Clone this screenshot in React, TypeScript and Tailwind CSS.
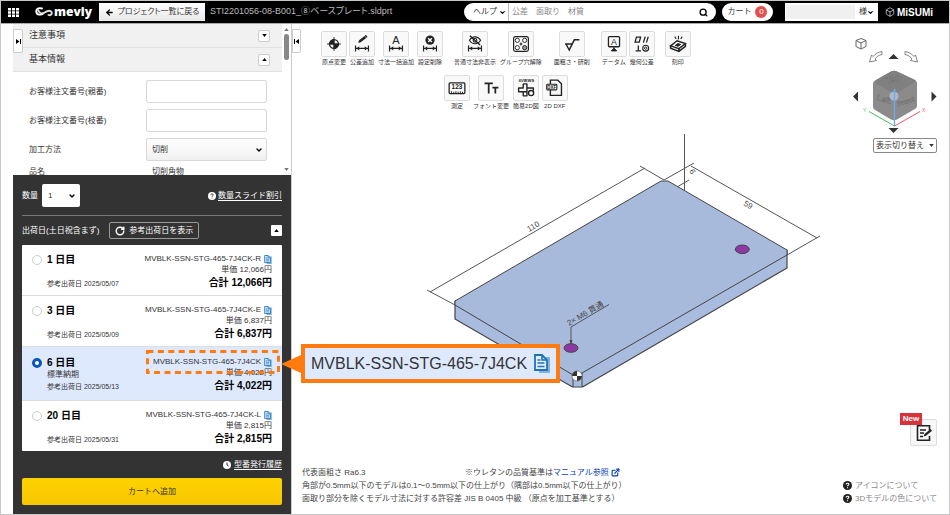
import type { ReactNode } from 'react';
import { ArrowLeft, Box, ChevronDown, ExternalLink, RotateCw, Search } from 'lucide-react';

const quotes = [
  { days: '1', date: '2025/05/07', code: 'MVBLK-SSN-STG-465-7J4CK-R', price: '12,066' },
  { days: '3', date: '2025/05/09', code: 'MVBLK-SSN-STG-465-7J4CK-E', price: '6,837' },
  { days: '6', date: '2025/05/13', code: 'MVBLK-SSN-STG-465-7J4CK', price: '4,022', note: '標準納期', selected: true },
  { days: '20', date: '2025/05/31', code: 'MVBLK-SSN-STG-465-7J4CK-L', price: '2,815' },
];

function CopyIcon({ className }: { className: string }) {
  return (
    <svg viewBox="0 0 16 19" className={className} fill="none">
      <path d="M5 3h11v16H5z" fill="#7fb4e0" />
      <path d="M1 1h7l5 5v10H1z" fill="#e3edff" stroke="#1e73b8" strokeWidth="1.8" />
      <path d="M8 1v5h5M3.500 6h3M3.500 9h7M3.500 12.500h7" stroke="#1e73b8" strokeWidth="1.6" />
    </svg>
  );
}

function HelpIcon({ className }: { className: string }) {
  return (
    <svg viewBox="0 0 10 10" className={className}>
      <circle cx="5" cy="5" r="5" fill="currentColor" />
      <path d="M3.500 4c0-2 3-2 3-.3 0 1-1.500 1-1.500 2.100M5 7v1" fill="none" stroke="var(--mark)" strokeWidth="1.200" />
    </svg>
  );
}

function Triangle({ className }: { className: string }) {
  return (
    <svg viewBox="0 0 6 4" className={className} fill="currentColor">
      <path d="M0 4 3 0l3 4z" />
    </svg>
  );
}

function DimArrow() {
  return (
    <g>
      <path d="M6 14.500v6.500M20 14.500v6.500M6.500 17.800h13" strokeWidth="1.300" />
      <path d="m10 15.500-3 2.300 3 2.300zM16 15.500l3 2.300-3 2.300z" fill="#222" stroke="none" />
    </g>
  );
}

const icons: Record<string, ReactNode> = {
  origin: (
    <>
      <circle cx="13" cy="13" r="4.800" strokeWidth="1.500" />
      <path d="M13 13V8.200A4.800 4.800 0 0 0 8.200 13zM13 13v4.800a4.800 4.800 0 0 0 4.800-4.800z" fill="#222" />
      <path d="M13 5.500v15M5.500 13h15" />
    </>
  ),
  tolerance: (
    <>
      <path d="m9 12 .8-3 6-4.800 1.800 2.200-6 4.800z" fill="#222" stroke="none" />
      <path d="m16.600 3.600 1.900 2.200" strokeWidth="1.500" />
      <DimArrow />
    </>
  ),
  dimension: (
    <>
      <text x="13" y="12.500" textAnchor="middle" fontSize="12" fill="#222" stroke="none">A</text>
      <DimArrow />
    </>
  ),
  remove: (
    <>
      <circle cx="13" cy="8.800" r="5" fill="#222" stroke="none" />
      <path d="m11 6.800 4 4M15 6.800l-4 4" stroke="#fff" strokeWidth="1.600" />
      <DimArrow />
    </>
  ),
  hide: (
    <>
      <path d="M7 9c3-5 9-5 12 0-3 5-9 5-12 0z" strokeWidth="1.300" />
      <circle cx="13" cy="9" r="2" strokeWidth="1.200" />
      <path d="m7.500 4 11 10" strokeWidth="1.500" />
      <DimArrow />
    </>
  ),
  group: (
    <>
      <rect x="5" y="5" width="16" height="16" rx="2" strokeWidth="1.300" />
      <circle cx="9" cy="9" r="2.300" />
      <circle cx="17" cy="9" r="2.300" />
      <circle cx="9" cy="17" r="2.300" />
      <circle cx="17" cy="17" r="2.300" fill="#999" />
      <path d="M13 11.500v3M11.500 13h3" strokeWidth="1.200" />
    </>
  ),
  rough: <path d="M5.500 13h7.500M6.500 13l3.500 6.500 5.500-11H21" strokeWidth="1.600" />,
  datum: (
    <>
      <rect x="7" y="5" width="12" height="11" rx="1" strokeWidth="1.400" />
      <text x="13" y="14" textAnchor="middle" fontSize="9.500" fill="#222" stroke="none">A</text>
      <path d="M13 16v3M10 20.500l3-3 3 3z" fill="#222" />
    </>
  ),
  geometric: (
    <>
      <path d="M7 5.500h4.500L10 11H5.500zM14.500 11.500l2-6.500M17.800 11.500l2-6.500M6 20.500h6M9 14.500v6" strokeWidth="1.400" />
      <circle cx="17" cy="17.500" r="3.200" strokeWidth="1.200" />
      <circle cx="17" cy="17.500" r="1.300" />
    </>
  ),
  stamp: (
    <>
      <path d="m5 15 7-5.500 9 3-7 5.500z" strokeWidth="1.500" />
      <path d="M5 15v2.500l9 3.500 7-5.500v-3M14 18v3" strokeWidth="1.700" />
      <path d="m10 14.500 3-2 3 1-3 2z" fill="#222" />
      <path d="M13.500 4v4M9.500 5l1.500 2.500M17.500 5 16 7.500" strokeWidth="1.200" />
    </>
  ),
  measure: (
    <>
      <rect x="4.500" y="7.500" width="17" height="11.500" rx="1" strokeWidth="1.400" />
      <text x="13" y="14.500" textAnchor="middle" fontSize="7" fontWeight="bold" fill="#222" stroke="none">123</text>
      <path d="M7 19v-2.500M9.400 19v-2M11.800 19v-2.500M14.200 19v-2M16.600 19v-2.500M19 19v-2" />
    </>
  ),
  font: <path d="M6 8h9M10.500 8v11M14.500 12.500H21M17.700 12.500V19" strokeWidth="1.900" />,
  views: (
    <>
      <text x="13.500" y="6.500" textAnchor="middle" fontSize="4.500" fontWeight="bold" fill="#222" stroke="none">6VIEWS</text>
      <path d="M10 8.500h4V13h7v3M10 8.500V13H5v4h5v4.500h4V17M14 13v4h-4" strokeWidth="1.500" strokeLinejoin="round" />
      <circle cx="18.500" cy="18.500" r="2.800" strokeWidth="1.500" />
    </>
  ),
  dxf: (
    <>
      <path d="M8 9V4.500h8l4 4v12.500H8v-6" strokeWidth="1.500" />
      <rect x="4" y="9" width="11" height="6" rx="1" fill="#fff" strokeWidth="1.200" />
      <text x="9.500" y="13.700" textAnchor="middle" fontSize="4.800" fontWeight="bold" fill="#222" stroke="none">DXF</text>
    </>
  ),
};

const toolRows = [
  [
    [['origin', '原点変更'], ['tolerance', '公差追加'], ['dimension', '寸法一括追加'], ['remove', '設定削除']],
    [['hide', '普通寸法非表示'], ['group', 'グループ穴解除']],
    [['rough', '面粗さ・研削']],
    [['datum', 'データム'], ['geometric', '幾何公差']],
    [['stamp', '刻印']],
  ],
  [[['measure', '測定'], ['font', 'フォント変更'], ['views', '簡易2D図'], ['dxf', '2D DXF']]],
];

function Toolbar() {
  return (
    <div className="flex flex-col items-center gap-2">
      {toolRows.map((groups, i) => (
        <div key={i} className="flex gap-[10px]">
          {groups.map((group, j) => (
            <div key={j} className="flex gap-[2px]">
              {group.map(([icon, label]) => (
                <button key={icon} className="flex flex-col items-center whitespace-nowrap text-[6px] leading-[10px] text-[#333]">
                  <svg
                    viewBox="0 0 26 26"
                    fill="none"
                    stroke="#222"
                    className="size-[26px] rounded-[2px] border border-[#ddd] bg-[#f9f9f9]"
                  >
                    {icons[icon]}
                  </svg>
                  <span className="px-px">{label}</span>
                </button>
              ))}
            </div>
          ))}
        </div>
      ))}
    </div>
  );
}

function Header() {
  return (
    <header className="flex h-[22px] items-center bg-black text-[8px] text-[#333]">
      <button aria-label="メニュー" className="ml-[6px] p-px">
        <svg viewBox="0 0 11 9" className="h-[9px] w-[11px]" fill="#fff">
          <path d="M0 0h3v2.400H0zM4 0h3v2.400H4zM8 0h3v2.400H8zM0 3.300h3v2.400H0zM4 3.300h3v2.400H4zM8 3.300h3v2.400H8zM0 6.600h3V9H0zM4 6.600h3V9H4zM8 6.600h3V9H8z" />
        </svg>
      </button>
      <a href="#" className="ml-[15px] flex w-[64px] items-center gap-px text-white">
        <svg viewBox="0 0 18 10" className="h-[10px] w-[18px]" fill="none" stroke="#fff" strokeLinecap="round">
          <path d="M7 1.500C3 .2 1 2.500 1.300 4.800 1.700 8 6 8.500 8.500 6.200" strokeWidth="1.900" />
          <path d="M3 3c2 4 4 4 6.500 2.500C12 4 15 2.500 16.500 5c1 2-1 4-3 3" strokeWidth="1.900" stroke="#ddd" />
        </svg>
        <span className="font-['Open_Sans'] text-[12px] leading-[16px] font-extrabold">meviy</span>
      </a>
      <button className="flex h-[18px] w-[106px] shrink-0 items-center justify-center gap-1 bg-linear-to-b from-white to-[#e8e8e8] whitespace-nowrap [font-feature-settings:'palt']">
        <ArrowLeft className="size-[9px] text-black" strokeWidth={3.5} />
        プロジェクト一覧に戻る
      </button>
      <span className="ml-[5px] flex-1 text-[9px] whitespace-nowrap text-[#bbb] [font-feature-settings:'palt']">
        STI2201056-08-B001_⑧ベースプレート.sldprt
      </span>
      <form className="flex h-[18px] w-[252px] items-center overflow-hidden rounded-full bg-white">
        <div className="relative flex items-center">
          <select aria-label="検索対象" className="h-[18px] w-[45px] appearance-none border-r border-[#bbb] pl-[9px]">
            <option>ヘルプ</option>
          </select>
          <ChevronDown className="pointer-events-none absolute right-[3px] size-[7px] text-black" strokeWidth={4} />
        </div>
        <input aria-label="検索" placeholder="公差　面取り　材質" className="min-w-0 flex-1 pl-[3px] placeholder:text-[#888] focus:outline-none" />
        <button type="button" aria-label="検索する" className="mr-2">
          <Search className="size-[9px] text-black" strokeWidth={3.5} />
        </button>
      </form>
      <button className="ml-[6px] flex h-[18px] w-[51px] items-center justify-center gap-1 rounded-full bg-white">
        カート
        <span className="flex size-[12px] items-center justify-center rounded-full bg-[#e05252] text-white">0</span>
      </button>
      <button className="ml-3 flex h-[18px] w-[93px] items-center bg-white pl-px">
        <span className="h-[14px] w-[69px] bg-[#f0f0f0]" />
        <span className="ml-[4px]">様</span>
        <ChevronDown className="size-[7px] text-black" strokeWidth={4} />
      </button>
      <a href="#" className="mr-[16px] ml-[7px] flex items-center gap-[2px] text-[10px] font-bold text-white">
        <Box className="size-[10px]" strokeWidth={1.5} />
        MiSUMi
      </a>
    </header>
  );
}

function SectionTitle({ title, open }: { title: string; open: boolean }) {
  return (
    <div className="flex h-[24px] items-center justify-between border-b border-[#e2e2e2] bg-[#f1f1f1] pr-3 pl-4 text-[9px]">
      {title}
      <button aria-label={title} className="flex size-[12px] items-center justify-center rounded-[2px] border border-[#ccc] bg-white text-black">
        <Triangle className={open ? 'h-[3px] w-[5px]' : 'h-[3px] w-[5px] rotate-180'} />
      </button>
    </div>
  );
}

function OrderForm() {
  return (
    <div className="flex min-h-[151px] flex-1 basis-0 overflow-hidden text-[8px] text-[#333]">
      <div className="h-[151px] flex-1 overflow-hidden">
        <SectionTitle title="注意事項" open={false} />
        <SectionTitle title="基本情報" open />
        <div className="flex flex-col gap-[6px] pt-2 pr-[15px] pl-4">
          <div className="flex items-center justify-between">
            <label htmlFor="order-parent">お客様注文番号(親番)</label>
            <input id="order-parent" className="h-[23px] w-[121px] rounded-[2px] border border-[#d8d8d8]" />
          </div>
          <div className="flex items-center justify-between">
            <label htmlFor="order-branch">お客様注文番号(枝番)</label>
            <input id="order-branch" className="h-[23px] w-[121px] rounded-[2px] border border-[#d8d8d8]" />
          </div>
          <div className="relative flex items-center justify-between">
            <label htmlFor="process">加工方法</label>
            <select id="process" className="h-[23px] w-[121px] appearance-none rounded-[2px] border border-[#d8d8d8] bg-linear-to-b from-white to-[#f0f0f0] pl-[5px]">
              <option>切削</option>
            </select>
            <ChevronDown className="pointer-events-none absolute right-[4px] size-[8px] text-black" strokeWidth={4} />
          </div>
          <div className="flex justify-between leading-[10px]">
            <span>品名</span>
            <span className="w-[115px]">切削角物</span>
          </div>
        </div>
      </div>
      <div className="flex w-[9px] flex-col items-center bg-white py-[4px] text-[#777]">
        <Triangle className="h-[3px] w-[5px]" />
        <div className="mt-[3px] h-[26px] w-[5px] rounded-full bg-[#888]" />
        <Triangle className="mt-auto h-[3px] w-[5px] rotate-180" />
      </div>
    </div>
  );
}

function Callout() {
  return (
    <>
      <svg viewBox="0 0 134 24" className="pointer-events-none absolute top-[-6px] right-[-8px] h-[24px] w-[134px]">
        <rect x="1.500" y="1.500" width="131" height="21" fill="none" stroke="#ff7a0f" strokeWidth="3" strokeDasharray="6 4.400" />
      </svg>
      <div className="absolute top-[-12px] left-full z-10 ml-[9px] flex items-center">
        <svg viewBox="0 0 20 18" className="h-[18px] w-[20px]">
          <path d="M0 9 20 0v18z" fill="#ff7a0f" />
        </svg>
        <div className="flex h-[39px] w-[259px] items-center justify-between border-4 border-[#ff7a0f] bg-[#dfe9fe] px-[6px] text-[16px] text-[#333]">
          MVBLK-SSN-STG-465-7J4CK
          <CopyIcon className="h-[19px] w-[16px]" />
        </div>
      </div>
    </>
  );
}

function QuotePanel() {
  return (
    <div className="bg-[#333] p-[9px] text-[8px] text-white">
      <div className="flex items-center justify-between border-b border-[#777] pb-2">
        <div className="relative flex items-center gap-[4px]">
          <label htmlFor="quantity">数量</label>
          <select id="quantity" className="h-[23px] w-[38px] appearance-none rounded-[2px] bg-white pl-[6px] text-[#333]">
            <option>1</option>
          </select>
          <ChevronDown className="pointer-events-none absolute right-[4px] size-[8px] text-black" strokeWidth={4} />
        </div>
        <a href="#" className="flex items-center gap-[2px] [--mark:#333]">
          <HelpIcon className="size-[8px]" />
          <span className="border-b border-white leading-[9px]">数量スライド割引</span>
        </a>
      </div>
      <div className="flex h-[29px] items-center">
        出荷日(土日祝含まず)
        <button className="ml-[10px] flex h-[17px] w-[90px] items-center justify-center gap-[4px] rounded-[2px] border border-[#999]">
          <RotateCw className="size-[10px]" strokeWidth={3.5} />
          参考出荷日を表示
        </button>
        <button aria-label="閉じる" className="ml-auto flex size-[11px] items-center justify-center rounded-[1px] bg-white text-black">
          <Triangle className="h-[3px] w-[5px]" />
        </button>
      </div>
      <div className="divide-y divide-[#ddd] rounded-[1px] bg-white text-[#333]">
        {quotes.map((q) => (
          <label
            key={q.days}
            className={q.selected ? 'flex bg-[#dfe9fe] pt-[9px] pr-[10px] pb-[7px] pl-[10px]' : 'flex pt-2 pr-[10px] pb-[5px] pl-[10px]'}
          >
            <input
              type="radio"
              name="delivery"
              defaultChecked={q.selected}
              className="mt-[2px] size-[10px] appearance-none rounded-full border border-[#ccc] bg-white checked:border-[3px] checked:border-[#0a57b5]"
            />
            <span className="ml-[5px] flex flex-col">
              <b className="text-[10px] leading-[14px] text-black">{q.days} 日目</b>
              <span className="h-[10px] leading-[10px]">{q.note}</span>
              <span className="mt-auto text-[7px] leading-[13px]">参考出荷日 {q.date}</span>
            </span>
            <span className="ml-auto flex flex-col items-end">
              <span className="relative flex h-[12px] items-center gap-[3px]">
                {q.code}
                <CopyIcon className="h-[9px] w-[8px]" />
                {q.selected && <Callout />}
              </span>
              <span className="leading-[10px]">単価 {q.price}円</span>
              <b className="text-[10px] leading-[15px] text-black">合計 {q.price}円</b>
            </span>
          </label>
        ))}
      </div>
      <div className="flex h-[27px] items-center justify-end">
        <a href="#" className="flex items-center gap-[3px]">
          <svg viewBox="0 0 8 8" className="size-[8px]">
            <circle cx="4" cy="4" r="4" fill="#fff" />
            <path d="M4 1.500V4l1.700 1.200" fill="none" stroke="#333" />
          </svg>
          <span className="border-b border-white leading-[9px]">型番発行履歴</span>
        </a>
      </div>
      <button className="h-[27px] w-full rounded-[2px] bg-linear-to-b from-[#ffd200] to-[#f7c600] text-[#333]">カートへ追加</button>
    </div>
  );
}

function Model() {
  return (
    <svg viewBox="292 24 657 490" className="absolute inset-0 h-full w-full" stroke="#444" strokeLinejoin="round">
      <path d="M455 301v18l117.500 68h10L787 268v-18z" fill="#a9bcdf" strokeWidth="1.200" />
      <path d="M455 301 661 181h7l119 69v5L582 373l-9 2-118-70z" fill="#a7badb" />
      <path d="M573 375v12M582 373v14" fill="none" />
      <g fill="none" stroke="#555">
        <path d="M427 290l28 15M430 292l215-124M640 166l24 14 30-17M691 166l126 72M820 236l-33 19M684.500 134v57M677 187l12-7" />
        <path d="M571 343v-16l38-22.500" />
      </g>
      <g fill="#444" stroke="none">
        <path d="m571 345-1.500-5h3z" />
        <text fontSize="8" transform="translate(529 232) rotate(-30)">110</text>
        <text fontSize="8" transform="translate(743 205) rotate(30)">59</text>
        <text fontSize="8" transform="translate(689 171) rotate(60)">6</text>
        <text fontSize="8" transform="translate(569 326) rotate(-30)">2× M6 貫通</text>
      </g>
      <ellipse cx="742.300" cy="249.300" rx="7" ry="4.300" fill="#8d38a4" />
      <ellipse cx="571" cy="348" rx="7" ry="4.300" fill="#8d38a4" />
      <ellipse cx="577" cy="376" rx="5" ry="5" fill="#fff" strokeWidth=".5" />
      <path d="M577 376v-5a5 5 0 0 0-5 5zM577 376v5a5 5 0 0 0 5-5z" fill="#333" stroke="none" />
    </svg>
  );
}

function ViewCube() {
  return (
    <div className="flex w-[88px] flex-col items-center">
      <svg viewBox="0 0 88 100" className="h-[100px] w-[88px]" fill="none">
        <g stroke="#666">
          <path d="m5 2.500 5-2 5 2v6l-5 2.500-5-2.500zM5 2.500l5 2.500 5-2.500M10 5v6" />
          <path d="M31 13.500c-4 .5-7 2.500-9 5l-1.500-1.500-2 7 7-1.500-1.500-1.500c1.500-2.500 4-4 7-4.500zM54 13.500c4 .5 7 2.500 9 5l1.500-1.500 2 7-7-1.500 1.500-1.500c-1.500-2.500-4-4-7-4.500z" strokeWidth=".8" />
        </g>
        <path d="m37.500 21 5-5 5 5zM37.500 90h10l-5 5zM7 53.500v10l-5-5zM80.500 53.500v10l5-5z" fill="#333" />
        <path d="M40 33.500c2-1 4-1 6 0l17 8c2 1 3 2 3 4v22c0 2-1 3-3 4l-17 10c-2 1-4 1-6 0l-15-9c-2-1-3-2-3-4V46c0-2 1-3 3-4z" fill="#8b8b8b" />
        <path d="M40 33.500c2-1 4-1 6 0l17 8c2 1 2 2 0 3L48 54c-3 2-5 2-8 0l-14-8c-2-1-2-3-1-4z" fill="#808080" />
        <g fill="#959595" stroke="#666" strokeWidth=".4" fontSize="8" fontWeight="bold">
          <text transform="translate(36 45) rotate(-14)">Top</text>
          <text transform="translate(25 62) rotate(16)">Left</text>
          <text transform="translate(47 69) rotate(-20)" fontSize="7">Front</text>
        </g>
        <circle cx="43" cy="58" r="4.500" fill="#b0b8c4" />
        <path d="M43.500 88V52" stroke="#64aef5" strokeWidth="1.300" />
        <path d="M43.500 88 18 73.500" stroke="#3cc45c" />
        <path d="M43.500 88 69 73.500" stroke="#f0575c" />
        <g fontSize="5">
          <text x="12" y="74" fill="#3cc45c">Y</text>
          <text x="71" y="74" fill="#f0575c">X</text>
          <text x="42" y="55" fill="#64aef5">Z</text>
        </g>
      </svg>
      <button className="ml-[20px] flex h-[15px] w-[64px] items-center justify-center gap-[5px] rounded-[2px] border border-[#888] bg-white text-[8px] whitespace-nowrap text-[#333]">
        表示切り替え
        <Triangle className="h-[3px] w-[5px] rotate-180" />
      </button>
    </div>
  );
}

function Viewer() {
  return (
    <main className="relative flex flex-1 flex-col justify-between bg-white">
      <Model />
      <button aria-label="パネルを閉じる" className="absolute top-[5px] left-0 flex h-[24px] w-[9px] items-center justify-center rounded-r-[2px] border border-[#ccc] bg-white">
        <svg viewBox="0 0 5 5" className="size-[5px]"><path d="M0 0h1v5H0zM5 0v5L1.500 2.500z" /></svg>
      </button>
      <div className="relative flex justify-between pt-[7px] pr-[10px] pl-[29px]">
        <Toolbar />
        <div className="pt-[7px]">
          <ViewCube />
        </div>
      </div>
      <div className="relative flex items-end justify-between pr-3 pb-[9px] pl-[10px] text-[8px] leading-[13px] text-[#444]">
        <div>
          <p className="flex">
            <span className="w-[163px]">代表面粗さ Ra6.3</span>
            <span>※ウレタンの品質基準は</span>
            <a href="#" className="flex items-center gap-[2px] text-[#0a3fb0]">
              マニュアル参照
              <ExternalLink className="size-[9px]" strokeWidth={3} />
            </a>
          </p>
          <p>角部が0.5mm以下のモデルは0.1～0.5mm以下の仕上がり（隅部は0.5mm以下の仕上がり）</p>
          <p>面取り部分を除くモデル寸法に対する許容差 JIS B 0405 中級 （原点を加工基準とする）</p>
        </div>
        <div className="text-[#888]">
          <button aria-label="メモ" className="relative mb-[33px] ml-auto flex size-[27px] items-center justify-center rounded-[2px] border border-[#ddd] bg-[#f7f7f7]">
            <svg viewBox="0 0 18 18" className="size-[18px]" fill="none" stroke="#222">
              <path d="M14.500 6V1.800h-12v14.400h12V12" strokeWidth="1.600" />
              <path d="M5 6h6M5 9h4M5 12.500h3" strokeWidth="1.400" />
              <path d="m8.500 12.500 1-2.500L15.500 5l1.500 1.700-6 5z" fill="#222" stroke="none" />
            </svg>
            <span className="absolute top-[-7px] left-[-11px] w-[22px] bg-[#d9323c] text-center text-[8px] leading-[12px] font-bold text-white">New</span>
          </button>
          <a href="#" className="flex items-center gap-[3px] [--mark:#fff]">
            <HelpIcon className="size-[9px] text-[#222]" />
            アイコンについて
          </a>
          <a href="#" className="flex items-center gap-[3px] [--mark:#fff]">
            <HelpIcon className="size-[9px] text-[#222]" />
            3Dモデルの色について
          </a>
        </div>
      </div>
    </main>
  );
}

export default function App() {
  return (
    <div className="flex min-h-screen flex-col border border-[#c8c8c8] bg-white font-['Liberation_Sans','Noto_Sans_CJK_JP',sans-serif]">
      <Header />
      <div className="flex flex-1 border-t border-[#aaa] pl-3">
        <aside className="relative z-10 flex w-[279px] shrink-0 flex-col border-r border-[#ccc]">
          <button aria-label="パネルを開く" className="absolute top-[5px] left-0 flex h-[24px] w-[10px] items-center justify-center rounded-r-[2px] border border-[#ccc] bg-white">
            <svg viewBox="0 0 5 5" className="size-[5px]"><path d="M4 0h1v5H4zM0 0v5l3.500-2.500z" /></svg>
          </button>
          <OrderForm />
          <QuotePanel />
        </aside>
        <Viewer />
      </div>
    </div>
  );
}
